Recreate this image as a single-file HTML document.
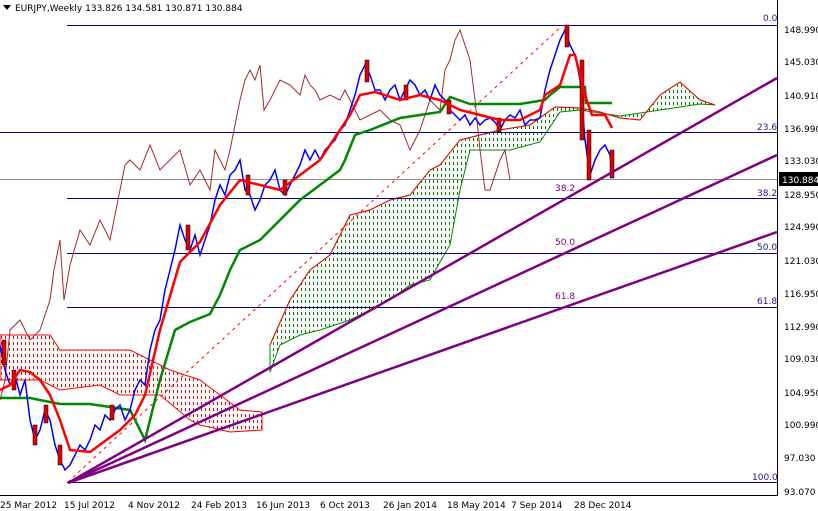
<!DOCTYPE html>
<html><head><meta charset="utf-8"><style>
html,body{margin:0;padding:0;background:#fff;width:818px;height:511px;overflow:hidden}
svg{display:block;font-family:"DejaVu Sans","Liberation Sans",sans-serif;font-size:9px}
</style></head><body>
<svg width="818" height="511" viewBox="0 0 818 511">
<defs>
<clipPath id="cr"><polygon points="0,335 50,335 60,350 130,350 170,370 200,380 240,410 262,412 262,430 230,432 200,425 190,420 160,395 120,395 100,385 60,390 40,380 0,380"/></clipPath>
<clipPath id="cg"><polygon points="270,345 290,300 310,270 330,255 350,215 370,210 390,200 410,195 430,170 440,165 460,140 480,135 500,130 530,125 555,107 580,108 600,112 620,118 640,120 660,95 680,82 700,100 715,105 700,104 620,116 580,110 560,112 540,142 510,150 470,150 460,190 450,245 440,262 430,280 410,285 390,300 370,310 350,320 320,330 300,335 280,345 270,372"/></clipPath>
</defs>
<rect width="818" height="511" fill="#fff"/>
<!-- clouds -->
<g clip-path="url(#cr)"><path stroke="#ff0000" stroke-width="1" stroke-dasharray="3,3" d="M1.5 0V511M5.5 0V511M9.5 0V511M13.5 0V511M17.5 0V511M21.5 0V511M25.5 0V511M29.5 0V511M33.5 0V511M37.5 0V511M41.5 0V511M45.5 0V511M49.5 0V511M53.5 0V511M57.5 0V511M61.5 0V511M65.5 0V511M69.5 0V511M73.5 0V511M77.5 0V511M81.5 0V511M85.5 0V511M89.5 0V511M93.5 0V511M97.5 0V511M101.5 0V511M105.5 0V511M109.5 0V511M113.5 0V511M117.5 0V511M121.5 0V511M125.5 0V511M129.5 0V511M133.5 0V511M137.5 0V511M141.5 0V511M145.5 0V511M149.5 0V511M153.5 0V511M157.5 0V511M161.5 0V511M165.5 0V511M169.5 0V511M173.5 0V511M177.5 0V511M181.5 0V511M185.5 0V511M189.5 0V511M193.5 0V511M197.5 0V511M201.5 0V511M205.5 0V511M209.5 0V511M213.5 0V511M217.5 0V511M221.5 0V511M225.5 0V511M229.5 0V511M233.5 0V511M237.5 0V511M241.5 0V511M245.5 0V511M249.5 0V511M253.5 0V511M257.5 0V511M261.5 0V511"/></g>
<g clip-path="url(#cg)"><path stroke="#008000" stroke-width="1" stroke-dasharray="3,3" d="M269.5 0V511M273.5 0V511M277.5 0V511M281.5 0V511M285.5 0V511M289.5 0V511M293.5 0V511M297.5 0V511M301.5 0V511M305.5 0V511M309.5 0V511M313.5 0V511M317.5 0V511M321.5 0V511M325.5 0V511M329.5 0V511M333.5 0V511M337.5 0V511M341.5 0V511M345.5 0V511M349.5 0V511M353.5 0V511M357.5 0V511M361.5 0V511M365.5 0V511M369.5 0V511M373.5 0V511M377.5 0V511M381.5 0V511M385.5 0V511M389.5 0V511M393.5 0V511M397.5 0V511M401.5 0V511M405.5 0V511M409.5 0V511M413.5 0V511M417.5 0V511M421.5 0V511M425.5 0V511M429.5 0V511M433.5 0V511M437.5 0V511M441.5 0V511M445.5 0V511M449.5 0V511M453.5 0V511M457.5 0V511M461.5 0V511M465.5 0V511M469.5 0V511M473.5 0V511M477.5 0V511M481.5 0V511M485.5 0V511M489.5 0V511M493.5 0V511M497.5 0V511M501.5 0V511M505.5 0V511M509.5 0V511M513.5 0V511M517.5 0V511M521.5 0V511M525.5 0V511M529.5 0V511M533.5 0V511M537.5 0V511M541.5 0V511M545.5 0V511M549.5 0V511M553.5 0V511M557.5 0V511M561.5 0V511M565.5 0V511M569.5 0V511M573.5 0V511M577.5 0V511M581.5 0V511M585.5 0V511M589.5 0V511M593.5 0V511M597.5 0V511M601.5 0V511M605.5 0V511M609.5 0V511M613.5 0V511M617.5 0V511M621.5 0V511M625.5 0V511M629.5 0V511M633.5 0V511M637.5 0V511M641.5 0V511M645.5 0V511M649.5 0V511M653.5 0V511M657.5 0V511M661.5 0V511M665.5 0V511M669.5 0V511M673.5 0V511M677.5 0V511M681.5 0V511M685.5 0V511M689.5 0V511M693.5 0V511M697.5 0V511M701.5 0V511M705.5 0V511M709.5 0V511M713.5 0V511"/></g>
<polygon fill="none" stroke="#f00" stroke-width="1" points="0,335 50,335 60,350 130,350 170,370 200,380 240,410 262,412 262,430 230,432 200,425 190,420 160,395 120,395 100,385 60,390 40,380 0,380"/>
<polygon fill="none" stroke="#080" stroke-width="1" points="270,345 290,300 310,270 330,255 350,215 370,210 390,200 410,195 430,170 440,165 460,140 480,135 500,130 530,125 555,107 580,108 600,112 620,118 640,120 660,95 680,82 700,100 715,105 700,104 620,116 580,110 560,112 540,142 510,150 470,150 460,190 450,245 440,262 430,280 410,285 390,300 370,310 350,320 320,330 300,335 280,345 270,372"/>
<polyline fill="none" stroke="#f00" stroke-width="1" points="270,345 290,300 310,270 330,255 350,215 370,210 390,200 410,195 430,170 440,165 460,140 480,135 500,130 530,125 555,107 580,108 600,112 620,118 640,120 660,95 680,82 700,100 715,105"/>
<!-- fib lines -->
<g stroke="#00008b" stroke-width="1">
<line x1="67" y1="25.5" x2="777" y2="25.5"/>
<line x1="0" y1="132.5" x2="777" y2="132.5"/>
<line x1="67" y1="198.5" x2="777" y2="198.5"/>
<line x1="67" y1="253.5" x2="777" y2="253.5"/>
<line x1="67" y1="307.5" x2="777" y2="307.5"/>
<line x1="67" y1="482.5" x2="777" y2="482.5"/>
</g>
<line x1="0" y1="179.5" x2="777" y2="179.5" stroke="#8c8c8c"/>
<line x1="68" y1="482" x2="563" y2="25" stroke="#f00" stroke-dasharray="3,4"/>
<!-- chikou -->
<polyline fill="none" stroke="#a52a2a" stroke-width="1" points="0,400 5,380 10,330 20,320 30,340 40,330 50,300 54,270 60,240 64,300 70,265 80,230 90,245 100,220 110,240 120,190 125,165 130,160 140,170 150,145 160,170 170,160 180,150 190,185 200,170 210,190 215,150 225,170 230,150 240,100 245,80 250,70 255,80 260,65 264,110 270,100 280,80 290,85 300,95 305,75 310,85 315,90 320,100 330,95 340,100 345,90 355,110 360,120 370,115 380,110 390,120 400,125 410,150 420,130 430,100 440,110 445,70 450,60 455,40 460,30 465,45 470,60 475,100 480,150 485,190 490,190 500,160 505,150 510,180"/>
<!-- kijun -->
<polyline fill="none" stroke="#080" stroke-width="2.5" points="0,398 30,398 60,404 90,404 130,410 140,430 145,440 150,420 160,380 175,330 190,322 210,314 220,295 230,270 240,250 260,240 280,220 300,200 320,185 340,170 345,160 355,135 370,130 400,118 440,112 450,97 470,104 520,104 545,100 550,95 560,87 585,87 586,103 612,103"/>
<!-- price -->
<polyline fill="none" stroke="#0000ff" stroke-width="1.5" points="0,345 5,370 10,385 15,375 20,395 25,380 30,420 35,440 40,430 45,410 50,420 55,445 60,460 65,470 70,465 75,455 80,445 85,450 90,440 95,425 100,430 105,415 110,420 115,410 120,405 125,420 130,410 135,390 140,380 145,385 150,350 155,330 160,320 165,290 170,270 175,250 180,225 185,240 190,250 195,235 200,255 205,240 210,225 215,200 220,185 225,195 230,175 235,170 240,160 245,190 250,195 255,210 260,200 265,185 270,180 275,170 280,190 285,195 290,185 295,175 300,165 305,150 310,160 315,150 320,160 325,150 330,145 335,140 340,130 345,125 350,110 355,95 360,75 365,65 370,75 375,90 380,90 385,100 390,90 395,85 400,100 405,90 410,80 415,85 420,95 425,90 430,100 435,85 440,95 445,100 450,110 455,115 460,120 465,115 470,125 475,118 480,125 485,120 490,118 495,122 500,130 505,120 510,115 515,118 520,110 525,125 530,120 535,120 540,118 545,90 550,70 555,55 560,40 565,30 570,45 575,55 580,80 585,140 590,175 595,160 600,150 605,145 610,155 613,178"/>
<g fill="#e00000" stroke="#000" stroke-width="0.5">
<rect x="2" y="340" width="4" height="25"/><rect x="12" y="370" width="4" height="20"/><rect x="33" y="425" width="4" height="20"/><rect x="44" y="405" width="4" height="18"/><rect x="58" y="445" width="4" height="20"/>
<rect x="110" y="405" width="4" height="15"/><rect x="186" y="225" width="4" height="25"/><rect x="246" y="175" width="4" height="20"/><rect x="283" y="180" width="4" height="15"/><rect x="365" y="60" width="4" height="22"/><rect x="404" y="85" width="4" height="15"/><rect x="447" y="100" width="4" height="14"/><rect x="497" y="118" width="4" height="14"/>
<rect x="565" y="25" width="4" height="22"/><rect x="580" y="60" width="4" height="80"/><rect x="587" y="130" width="4" height="50"/><rect x="610" y="150" width="4" height="28"/>
</g>
<!-- tenkan -->
<polyline fill="none" stroke="#f00" stroke-width="2.5" points="0,390 10,385 20,370 30,372 40,380 50,395 60,420 70,450 90,452 120,430 135,415 145,395 160,330 180,262 200,242 220,205 240,180 260,185 280,190 300,175 320,160 340,130 350,115 360,95 375,92 400,100 420,95 440,100 460,110 480,115 500,120 520,120 540,110 545,95 560,85 570,55 575,55 580,75 585,95 592,115 605,115 612,128"/>
<!-- fan -->
<g stroke="#800080" stroke-width="2.5">
<line x1="68" y1="483" x2="777" y2="78"/>
<line x1="68" y1="483" x2="777" y2="155"/>
<line x1="68" y1="483" x2="777" y2="232"/>
</g>
<!-- fib labels -->
<g fill="#1a1a8c">
<text x="763" y="21">0.0</text><text x="757" y="130">23.6</text><text x="757" y="196">38.2</text>
<text x="757" y="250">50.0</text><text x="757" y="304">61.8</text><text x="752" y="480">100.0</text>
</g>
<g fill="#800080"><text x="555" y="191">38.2</text><text x="555" y="245">50.0</text><text x="555" y="299">61.8</text></g>
<!-- axes -->
<line x1="777.5" y1="0" x2="777.5" y2="496" stroke="#000"/>
<line x1="0" y1="495.5" x2="778" y2="495.5" stroke="#000"/>
<g fill="#000">
<text x="784" y="33">148.990</text><text x="784" y="65">145.030</text><text x="784" y="99">140.910</text>
<text x="784" y="132">136.990</text><text x="784" y="164">133.030</text><text x="784" y="198">128.950</text>
<text x="784" y="230">124.990</text><text x="784" y="264">121.030</text><text x="784" y="297">116.950</text>
<text x="784" y="330">112.990</text><text x="784" y="362">109.030</text><text x="784" y="396">104.950</text>
<text x="784" y="428">100.990</text><text x="784" y="461">97.030</text><text x="784" y="495">93.070</text>
</g>
<rect x="779" y="172" width="39" height="14" fill="#000"/>
<text x="782" y="183" fill="#fff">130.884</text>
<g fill="#000">
<text x="0" y="508">25 Mar 2012</text><text x="64" y="508">15 Jul 2012</text><text x="128" y="508">4 Nov 2012</text>
<text x="191" y="508">24 Feb 2013</text><text x="256" y="508">16 Jun 2013</text><text x="320" y="508">6 Oct 2013</text>
<text x="383" y="508">26 Jan 2014</text><text x="447" y="508">18 May 2014</text><text x="511" y="508">7 Sep 2014</text>
<text x="574" y="508">28 Dec 2014</text>
</g>
<polygon points="3,5 11,5 7,10" fill="#000"/>
<text x="15" y="11" fill="#000">EURJPY,Weekly  133.826 134.581 130.871 130.884</text>
</svg>
</body></html>
